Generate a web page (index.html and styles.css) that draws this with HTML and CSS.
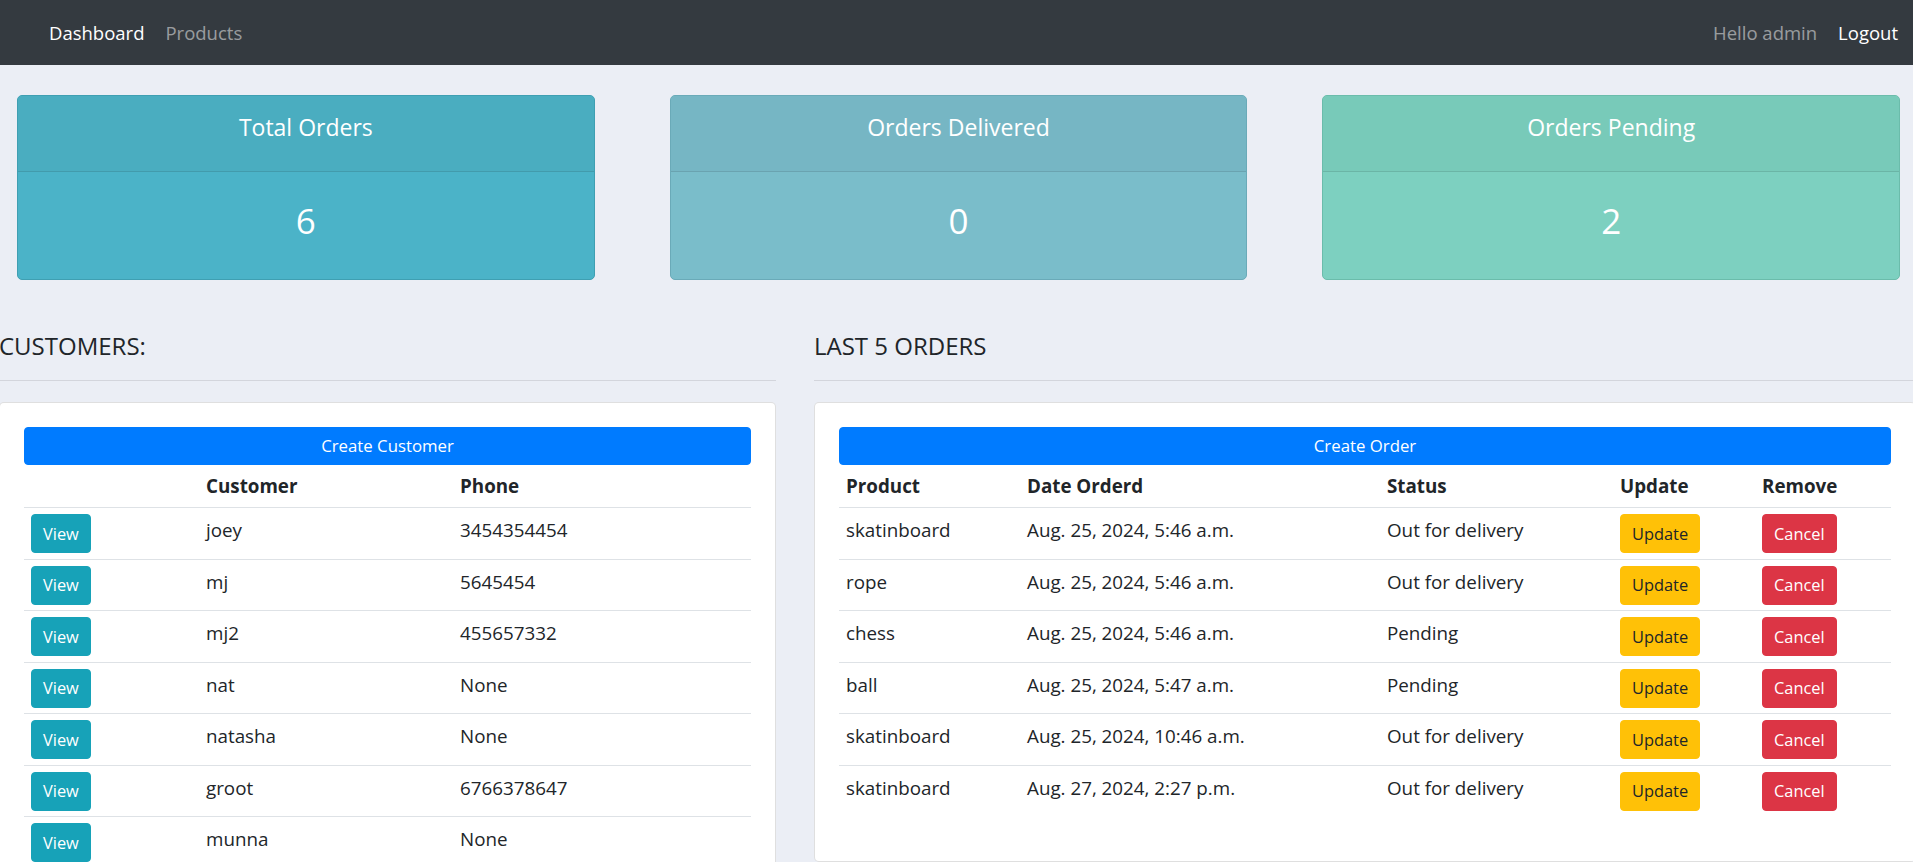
FILE: index.html
```html
<!DOCTYPE html>
<html lang="en">
<head>
<meta charset="utf-8">
<title>Dashboard</title>
<link rel="stylesheet" href="styles.css">
</head>
<body>
<nav class="topnav">
  <div class="nav-left">
    <a class="nav-link active" href="#">Dashboard</a>
    <a class="nav-link" href="#">Products</a>
  </div>
  <div class="nav-right">
    <span class="nav-link">Hello admin</span>
    <a class="nav-link active" href="#">Logout</a>
  </div>
</nav>

<section class="stats">
  <div class="stat stat-total">
    <div class="stat-head">Total Orders</div>
    <div class="stat-body">6</div>
  </div>
  <div class="stat stat-delivered">
    <div class="stat-head">Orders Delivered</div>
    <div class="stat-body">0</div>
  </div>
  <div class="stat stat-pending">
    <div class="stat-head">Orders Pending</div>
    <div class="stat-body">2</div>
  </div>
</section>

<section class="lists">
  <div class="list-col">
    <h5 class="list-title">CUSTOMERS:</h5>
    <hr class="divider">
    <div class="panel">
      <a class="btn btn-primary btn-block" href="#">Create Customer</a>
      <table class="table cust-table">
        <thead>
          <tr><th class="c1"></th><th class="c2">Customer</th><th class="c3">Phone</th></tr>
        </thead>
        <tbody>
          <tr><td><a class="btn btn-info" href="#">View</a></td><td>joey</td><td>3454354454</td></tr>
          <tr><td><a class="btn btn-info" href="#">View</a></td><td>mj</td><td>5645454</td></tr>
          <tr><td><a class="btn btn-info" href="#">View</a></td><td>mj2</td><td>455657332</td></tr>
          <tr><td><a class="btn btn-info" href="#">View</a></td><td>nat</td><td>None</td></tr>
          <tr><td><a class="btn btn-info" href="#">View</a></td><td>natasha</td><td>None</td></tr>
          <tr><td><a class="btn btn-info" href="#">View</a></td><td>groot</td><td>6766378647</td></tr>
          <tr><td><a class="btn btn-info" href="#">View</a></td><td>munna</td><td>None</td></tr>
        </tbody>
      </table>
    </div>
  </div>

  <div class="list-col">
    <h5 class="list-title">LAST 5 ORDERS</h5>
    <hr class="divider">
    <div class="panel">
      <a class="btn btn-primary btn-block" href="#">Create Order</a>
      <table class="table order-table">
        <thead>
          <tr><th class="o1">Product</th><th class="o2">Date Orderd</th><th class="o3">Status</th><th class="o4">Update</th><th class="o5">Remove</th></tr>
        </thead>
        <tbody>
          <tr><td>skatinboard</td><td>Aug. 25, 2024, 5:46 a.m.</td><td>Out for delivery</td><td><a class="btn btn-warning" href="#">Update</a></td><td><a class="btn btn-danger" href="#">Cancel</a></td></tr>
          <tr><td>rope</td><td>Aug. 25, 2024, 5:46 a.m.</td><td>Out for delivery</td><td><a class="btn btn-warning" href="#">Update</a></td><td><a class="btn btn-danger" href="#">Cancel</a></td></tr>
          <tr><td>chess</td><td>Aug. 25, 2024, 5:46 a.m.</td><td>Pending</td><td><a class="btn btn-warning" href="#">Update</a></td><td><a class="btn btn-danger" href="#">Cancel</a></td></tr>
          <tr><td>ball</td><td>Aug. 25, 2024, 5:47 a.m.</td><td>Pending</td><td><a class="btn btn-warning" href="#">Update</a></td><td><a class="btn btn-danger" href="#">Cancel</a></td></tr>
          <tr><td>skatinboard</td><td>Aug. 25, 2024, 10:46 a.m.</td><td>Out for delivery</td><td><a class="btn btn-warning" href="#">Update</a></td><td><a class="btn btn-danger" href="#">Cancel</a></td></tr>
          <tr><td>skatinboard</td><td>Aug. 27, 2024, 2:27 p.m.</td><td>Out for delivery</td><td><a class="btn btn-warning" href="#">Update</a></td><td><a class="btn btn-danger" href="#">Cancel</a></td></tr>
        </tbody>
      </table>
    </div>
  </div>
</section>
</body>
</html>
```
FILE: styles.css
```css
html {
  overflow: hidden;
}

* {
  box-sizing: border-box;
}

body {
  margin: 0;
  background: #ebeef5;
  color: #212529;
  font-family: "Open Sans", "Noto Sans", "Liberation Sans", sans-serif;
  font-size: 18.8px;
  line-height: 1.5;
  overflow-x: hidden;
}

a {
  text-decoration: none;
}

/* ---------- navbar ---------- */
.topnav {
  height: 65px;
  background: #343a40;
  display: flex;
  align-items: center;
  justify-content: space-between;
  padding: 0 15px 0 49px;
}

.nav-left,
.nav-right {
  display: flex;
  align-items: center;
  gap: 21px;
}

.nav-link {
  color: rgba(255, 255, 255, 0.5);
  font-size: 18.5px;
  line-height: 1.5;
}

.nav-link.active {
  color: #fff;
}

/* ---------- stat cards ---------- */
.stats {
  display: grid;
  grid-template-columns: repeat(3, 1fr);
  column-gap: 75px;
  padding: 30px 13px 0 17px;
}

.stat {
  height: 185px;
  border-radius: 5px;
  color: #fff;
  text-align: center;
  overflow: hidden;
  display: flex;
  flex-direction: column;
}

.stat-head {
  height: 76px;
  padding-top: 18px;
  font-size: 23px;
  line-height: 1.2;
  border-bottom: 1px solid rgba(0, 0, 0, 0.1);
}

.stat-body {
  flex: 1;
  padding-top: 28px;
  font-size: 35px;
  line-height: 1.2;
}

.stat-total {
  border: 1px solid #3f9fb2;
  background: #4bb3c8;
}
.stat-total .stat-head {
  background: #4aadc0;
}

.stat-delivered {
  border: 1px solid #6aaab8;
  background: #7abdca;
}
.stat-delivered .stat-head {
  background: #76b6c4;
}

.stat-pending {
  border: 1px solid #6bbcab;
  background: #7dd0c0;
}
.stat-pending .stat-head {
  background: #78cab9;
}

/* ---------- lists ---------- */
.lists {
  display: grid;
  grid-template-columns: 777px 1fr;
  column-gap: 38px;
  margin: 0 -3px 0 -1px;
}

.list-title {
  margin: 52px 0 0;
  font-size: 24px;
  font-weight: 400;
  line-height: 1.2;
  color: #212529;
}

.divider {
  margin: 19px 0 21px;
  border: 0;
  border-top: 1px solid rgba(0, 0, 0, 0.1);
}

.panel {
  background: #fff;
  border: 1px solid rgba(0, 0, 0, 0.125);
  border-radius: 5px;
  padding: 24px;
}

/* ---------- buttons ---------- */
.btn {
  display: inline-block;
  font-size: 16.4px;
  line-height: 24px;
  padding: 6.35px 11px;
  border: 1px solid transparent;
  border-radius: 4px;
  text-align: center;
  white-space: nowrap;
}

.btn-block {
  display: block;
  width: 100%;
  padding-top: 6px;
  padding-bottom: 6px;
  font-size: 16.8px;
}

.btn-primary {
  background: #007bff;
  border-color: #007bff;
  color: #fff;
}

.btn-info {
  background: #17a2b8;
  border-color: #17a2b8;
  color: #fff;
}

.btn-warning {
  background: #ffc107;
  border-color: #ffc107;
  color: #212529;
}

.btn-danger {
  background: #dc3545;
  border-color: #dc3545;
  color: #fff;
}

/* ---------- tables ---------- */
.table {
  width: 100%;
  border-collapse: collapse;
  margin-bottom: 21px;
  table-layout: fixed;
}

.table th {
  text-align: left;
  font-weight: 700;
  padding: 7px 7px 6.5px;
  line-height: 29px;
  border-bottom: 1px solid #dee2e6;
  vertical-align: bottom;
}

.table td {
  padding: 6.2px 7px 5.6px;
  line-height: 33px;
  border-top: 1px solid #dee2e6;
  vertical-align: top;
}

.table thead + tbody tr:first-child td {
  border-top: 0;
}

.cust-table .c1 { width: 175px; }
.cust-table .c2 { width: 254px; }

.order-table .o1 { width: 181px; }
.order-table .o2 { width: 360px; }
.order-table .o3 { width: 233px; }
.order-table .o4 { width: 142px; }
```
